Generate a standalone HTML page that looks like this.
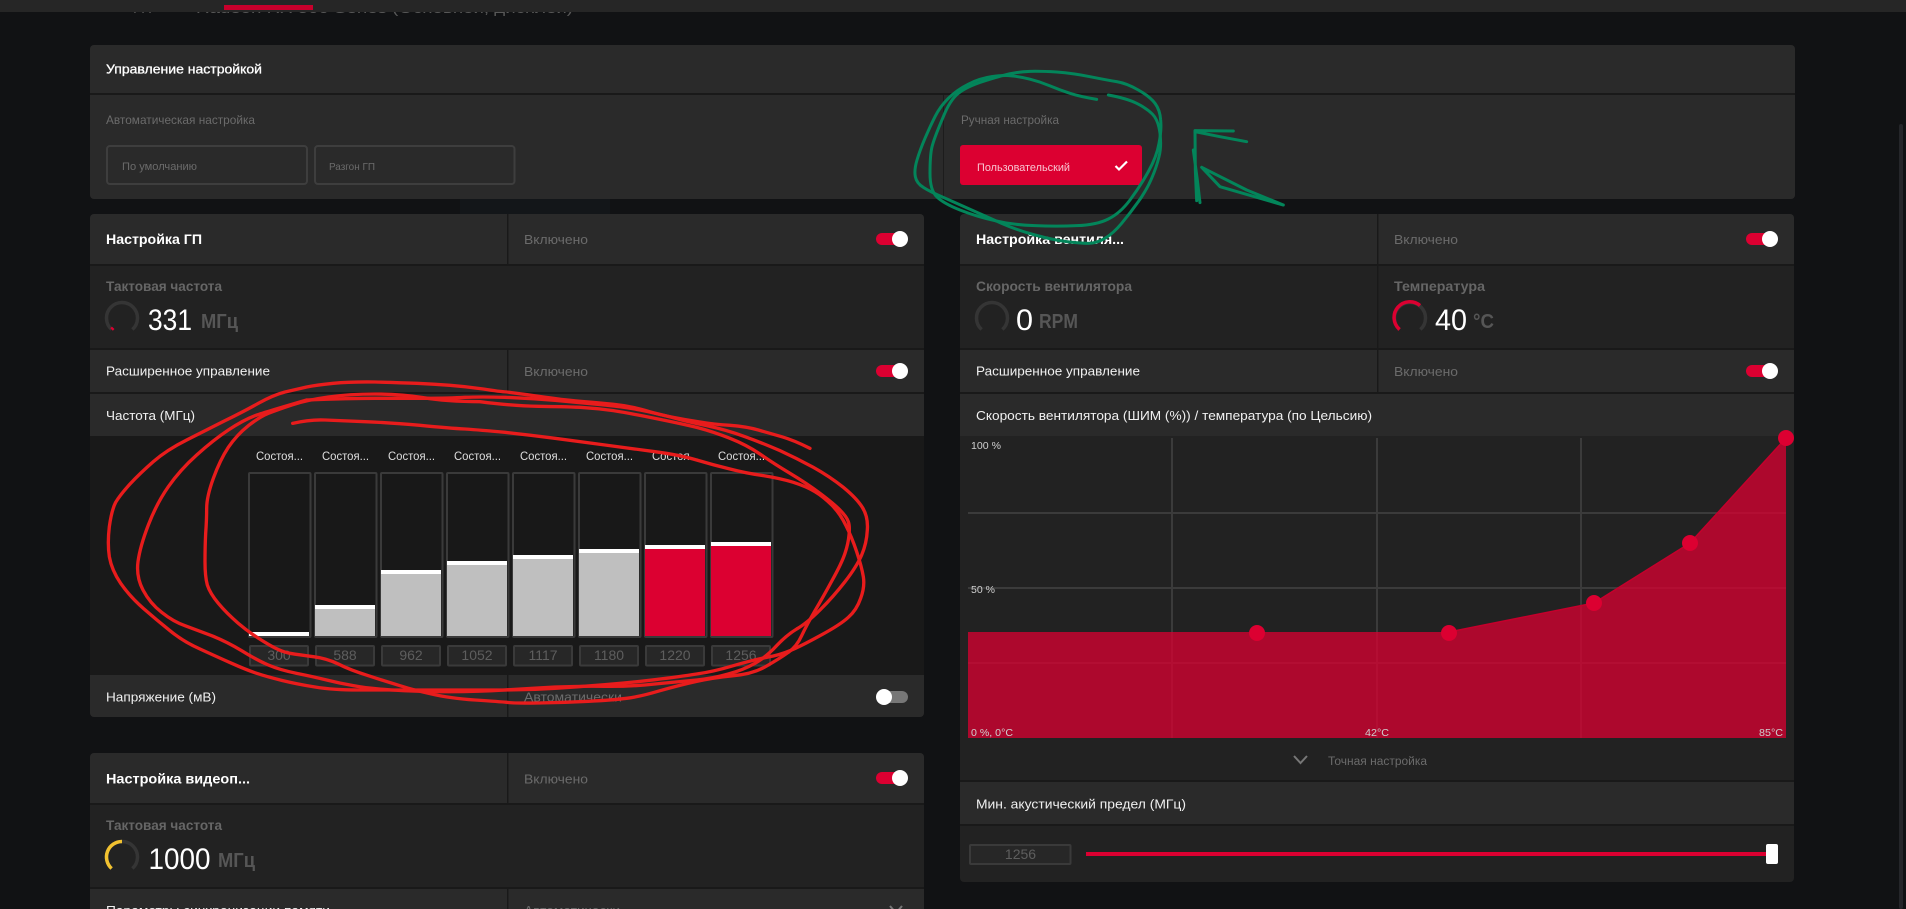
<!DOCTYPE html>
<html lang="ru"><head><meta charset="utf-8"><title>Настройка</title>
<style>
html,body{margin:0;padding:0;width:1906px;height:909px;overflow:hidden;background:#111214}
svg{display:block}
text{font-family:"Liberation Sans","Noto Sans CJK SC",sans-serif}
.w{fill:#f0f0f0;font-size:13px}
.b{fill:#fff;font-size:14px;font-weight:700}
.g{fill:#6b6b6b;font-size:13px}
.s{fill:#666;font-size:14px;font-weight:700}
.u{fill:#565656;font-size:20px;font-weight:700}
.n{fill:#fff;font-size:30px}
.st{fill:#dedede;font-size:12px;text-anchor:start}
.v{fill:#5e5e5e;font-size:14px;text-anchor:middle}
.c{fill:#cfcfcf;font-size:10.5px}
.r{fill:#2a2a2a}.d{fill:#222}.dk{fill:#191919}
.ga{fill:none;stroke:#353535;stroke-width:3.500}
</style></head><body>
<svg width="1906" height="909" viewBox="0 0 1906 909" xmlns="http://www.w3.org/2000/svg">
<rect width="1906" height="909" fill="#111214"/>
<rect x="460" y="199" width="150" height="15" fill="#131619"/>
<rect x="1899" y="124" width="4" height="785" rx="2" fill="#25262a"/>

<!-- top bar -->
<text x="133" y="13" fill="#585858" font-size="15">ГП</text>
<text x="196" y="13" fill="#585858" font-size="15" textLength="377" lengthAdjust="spacingAndGlyphs">Radeon RX 500 Series (Основной, дисплей)</text>
<rect width="1906" height="12" fill="#262626"/>
<rect x="224" y="5" width="89" height="5" fill="#c8002c"/>

<!-- tuning control -->
<g>
<rect x="90" y="45" width="1705" height="154" rx="4" fill="#191919"/>
<path d="M90 93V49a4 4 0 0 1 4-4H1791a4 4 0 0 1 4 4V93Z" class="r"/>
<path d="M90 95H1795V195a4 4 0 0 1-4 4H94a4 4 0 0 1-4-4Z" class="r"/>
<rect x="943" y="95" width="1" height="104" fill="#1c1c1c"/>
<text x="106" y="73.500" fill="#fff" font-size="13" stroke="#fff" stroke-width=".3" textLength="156" lengthAdjust="spacingAndGlyphs">Управление настройкой</text>
<text x="106" y="124" class="g" style="font-size:12px" textLength="149" lengthAdjust="spacingAndGlyphs">Автоматическая настройка</text>
<text x="961" y="124" class="g" style="font-size:12px" textLength="98" lengthAdjust="spacingAndGlyphs">Ручная настройка</text>
<rect x="107" y="146" width="200" height="38" rx="3" fill="none" stroke="#3e3e3e" stroke-width="2"/>
<rect x="315" y="146" width="199.500" height="38" rx="3" fill="none" stroke="#3e3e3e" stroke-width="2"/>
<text x="122" y="170" class="g" style="font-size:11px" textLength="75" lengthAdjust="spacingAndGlyphs">По умолчанию</text>
<text x="329" y="170" class="g" style="font-size:10.500px" textLength="46" lengthAdjust="spacingAndGlyphs">Разгон ГП</text>
<rect x="960" y="145" width="182" height="40" rx="3" fill="#dc0031"/>
<text x="977" y="171" fill="#f8c4d0" font-size="11" textLength="93" lengthAdjust="spacingAndGlyphs">Пользовательский</text>
<path d="M1115.500 166l3.500 3.500 8-8" fill="none" stroke="#fff" stroke-width="2.200"/>
</g>

<!-- GPU card -->
<g>
<rect x="90" y="214" width="834" height="503" rx="4" fill="#191919"/>
<path d="M90 264V218a4 4 0 0 1 4-4H507V264Z" class="r"/>
<path d="M508.500 214H920a4 4 0 0 1 4 4V264H508.500Z" class="r"/>
<rect x="90" y="266" width="834" height="82" class="d"/>
<rect x="90" y="350" width="417" height="42" class="r"/><rect x="508.500" y="350" width="415.500" height="42" class="r"/>
<rect x="90" y="394" width="834" height="42" class="r"/>
<path d="M90 675H507V717H94a4 4 0 0 1-4-4Z" class="r"/>
<path d="M508.500 675H924V713a4 4 0 0 1-4 4H508.500Z" class="r"/>
<text x="106" y="244" class="b" textLength="96" lengthAdjust="spacingAndGlyphs">Настройка ГП</text>
<text x="524" y="244" class="g" textLength="64" lengthAdjust="spacingAndGlyphs">Включено</text>
<rect x="876" y="233" width="30" height="12" rx="6" fill="#dc0031"/><circle cx="900" cy="239" r="8" fill="#fff"/>
<text x="106" y="291" class="s" textLength="116" lengthAdjust="spacingAndGlyphs">Тактовая частота</text>
<path d="M111.600 329.500A15.500 15.500 0 1 1 132.400 329.500" class="ga"/>
<path d="M111.600 329.500L113.200 327.800" fill="none" stroke="#dc0031" stroke-width="3.500"/>
<text x="148" y="330" class="n" textLength="44" lengthAdjust="spacingAndGlyphs">331</text>
<text x="201" y="328" class="u" textLength="37" lengthAdjust="spacingAndGlyphs">МГц</text>
<text x="106" y="375.500" class="w" textLength="164" lengthAdjust="spacingAndGlyphs">Расширенное управление</text>
<text x="524" y="376" class="g" textLength="64" lengthAdjust="spacingAndGlyphs">Включено</text>
<rect x="876" y="365" width="30" height="12" rx="6" fill="#dc0031"/><circle cx="900" cy="371" r="8" fill="#fff"/>
<text x="106" y="420" class="w" textLength="89" lengthAdjust="spacingAndGlyphs">Частота (МГц)</text>

<text x="256" y="460" class="st" textLength="47" lengthAdjust="spacingAndGlyphs">Состоя...</text>
<text x="322" y="460" class="st" textLength="47" lengthAdjust="spacingAndGlyphs">Состоя...</text>
<text x="388" y="460" class="st" textLength="47" lengthAdjust="spacingAndGlyphs">Состоя...</text>
<text x="454" y="460" class="st" textLength="47" lengthAdjust="spacingAndGlyphs">Состоя...</text>
<text x="520" y="460" class="st" textLength="47" lengthAdjust="spacingAndGlyphs">Состоя...</text>
<text x="586" y="460" class="st" textLength="47" lengthAdjust="spacingAndGlyphs">Состоя...</text>
<text x="652" y="460" class="st" textLength="47" lengthAdjust="spacingAndGlyphs">Состоя...</text>
<text x="718" y="460" class="st" textLength="47" lengthAdjust="spacingAndGlyphs">Состоя...</text>

<g fill="#181818" stroke="#3a3a3a" stroke-width="2">
<rect x="249" y="473" width="61.500" height="164" rx="1"/><rect x="315" y="473" width="61.500" height="164" rx="1"/>
<rect x="381" y="473" width="61.500" height="164" rx="1"/><rect x="447" y="473" width="61.500" height="164" rx="1"/>
<rect x="513" y="473" width="61.500" height="164" rx="1"/><rect x="579" y="473" width="61.500" height="164" rx="1"/>
<rect x="645" y="473" width="61.500" height="164" rx="1"/><rect x="711" y="473" width="61.500" height="164" rx="1"/>
</g>
<g fill="#bfbfbf">
<rect x="315" y="609" width="60" height="27"/><rect x="381" y="574" width="60" height="62"/>
<rect x="447" y="565" width="60" height="71"/><rect x="513" y="559" width="60" height="77"/>
<rect x="579" y="553" width="60" height="83"/>
</g>
<g fill="#dc0031"><rect x="645" y="549" width="60" height="87"/><rect x="711" y="546" width="60" height="90"/></g>
<g fill="#fff">
<rect x="249" y="632" width="60" height="4"/><rect x="315" y="605" width="60" height="4"/>
<rect x="381" y="570" width="60" height="4"/><rect x="447" y="561" width="60" height="4"/>
<rect x="513" y="555" width="60" height="4"/><rect x="579" y="549" width="60" height="4"/>
<rect x="645" y="545" width="60" height="4"/><rect x="711" y="542" width="60" height="4"/>
</g>
<g fill="#272727" stroke="#3a3a3a" stroke-width="2">
<rect x="250" y="646" width="58" height="19.500" rx="1"/><rect x="316" y="646" width="58" height="19.500" rx="1"/>
<rect x="382" y="646" width="58" height="19.500" rx="1"/><rect x="448" y="646" width="58" height="19.500" rx="1"/>
<rect x="514" y="646" width="58" height="19.500" rx="1"/><rect x="580" y="646" width="58" height="19.500" rx="1"/>
<rect x="646" y="646" width="58" height="19.500" rx="1"/><rect x="712" y="646" width="58" height="19.500" rx="1"/>
</g>
<text x="279" y="660" class="v">300</text><text x="345" y="660" class="v">588</text>
<text x="411" y="660" class="v">962</text><text x="477" y="660" class="v">1052</text>
<text x="543" y="660" class="v">1117</text><text x="609" y="660" class="v">1180</text>
<text x="675" y="660" class="v">1220</text><text x="741" y="660" class="v">1256</text>
<text x="106" y="701.500" class="w" textLength="110" lengthAdjust="spacingAndGlyphs">Напряжение (мВ)</text>
<text x="524" y="701.500" class="g" textLength="98" lengthAdjust="spacingAndGlyphs">Автоматически</text>
<rect x="880" y="691" width="28" height="12" rx="6" fill="#777"/><circle cx="884" cy="697" r="8" fill="#fff"/>
</g>

<!-- Video card -->
<g>
<rect x="90" y="753" width="834" height="170" rx="4" fill="#191919"/>
<path d="M90 803V757a4 4 0 0 1 4-4H507V803Z" class="r"/>
<path d="M508.500 753H920a4 4 0 0 1 4 4V803H508.500Z" class="r"/>
<rect x="90" y="805" width="834" height="82" class="d"/>
<rect x="90" y="889" width="417" height="20" class="r"/><rect x="508.500" y="889" width="415.500" height="20" class="r"/>
<text x="106" y="783.500" class="b" textLength="144" lengthAdjust="spacingAndGlyphs">Настройка видеоп...</text>
<text x="524" y="783.500" class="g" textLength="64" lengthAdjust="spacingAndGlyphs">Включено</text>
<rect x="876" y="772" width="30" height="12" rx="6" fill="#dc0031"/><circle cx="900" cy="778" r="8" fill="#fff"/>
<text x="106" y="830" class="s" textLength="116" lengthAdjust="spacingAndGlyphs">Тактовая частота</text>
<path d="M111.600 868.500A15.500 15.500 0 1 1 132.400 868.500" class="ga"/>
<path d="M111.600 868.500A15.500 15.500 0 0 1 122 841.500" fill="none" stroke="#f2c230" stroke-width="3.500"/>
<text x="148.500" y="869" class="n" textLength="62" lengthAdjust="spacingAndGlyphs">1000</text>
<text x="218" y="867" class="u" textLength="37" lengthAdjust="spacingAndGlyphs">МГц</text>
<text x="106" y="915" class="w" textLength="224" lengthAdjust="spacingAndGlyphs">Параметры синхронизации памяти</text>
<text x="524" y="915" class="g" textLength="96" lengthAdjust="spacingAndGlyphs">Автоматически</text>
<path d="M890 906l6 7 6-7" fill="none" stroke="#777" stroke-width="2"/>
</g>

<!-- Fan card -->
<g>
<rect x="960" y="214" width="834" height="668" rx="4" fill="#191919"/>
<path d="M960 264V218a4 4 0 0 1 4-4H1377V264Z" class="r"/>
<path d="M1378.500 214H1790a4 4 0 0 1 4 4V264H1378.500Z" class="r"/>
<rect x="960" y="266" width="417" height="82" class="d"/><rect x="1378.500" y="266" width="415.500" height="82" class="d"/>
<rect x="960" y="350" width="417" height="42" class="r"/><rect x="1378.500" y="350" width="415.500" height="42" class="r"/>
<rect x="960" y="394" width="834" height="42" class="r"/>
<rect x="960" y="436" width="834" height="304" class="d"/>
<rect x="960" y="740" width="834" height="40" class="d"/>
<rect x="960" y="782" width="834" height="42" class="r"/>
<path d="M960 826H1794V878a4 4 0 0 1-4 4H964a4 4 0 0 1-4-4Z" class="d"/>
<text x="976" y="244" class="b" textLength="148" lengthAdjust="spacingAndGlyphs">Настройка вентиля...</text>
<text x="1394" y="244" class="g" textLength="64" lengthAdjust="spacingAndGlyphs">Включено</text>
<rect x="1746" y="233" width="30" height="12" rx="6" fill="#dc0031"/><circle cx="1770" cy="239" r="8" fill="#fff"/>
<text x="976" y="291" class="s" textLength="156" lengthAdjust="spacingAndGlyphs">Скорость вентилятора</text>
<text x="1394" y="291" class="s" textLength="91" lengthAdjust="spacingAndGlyphs">Температура</text>
<path d="M981.600 329.500A15.500 15.500 0 1 1 1002.400 329.500" class="ga"/>
<text x="1016" y="330" class="n" textLength="17" lengthAdjust="spacingAndGlyphs">0</text>
<text x="1039" y="328" class="u" textLength="39" lengthAdjust="spacingAndGlyphs">RPM</text>
<path d="M1399.600 329.500A15.500 15.500 0 1 1 1420.400 329.500" class="ga"/>
<path d="M1399.600 329.500A15.500 15.500 0 0 1 1420 305.500" fill="none" stroke="#dc0031" stroke-width="3.500"/>
<text x="1435" y="330" class="n" textLength="32" lengthAdjust="spacingAndGlyphs">40</text>
<text x="1473" y="328" class="u" textLength="21" lengthAdjust="spacingAndGlyphs">°C</text>
<text x="976" y="375.500" class="w" textLength="164" lengthAdjust="spacingAndGlyphs">Расширенное управление</text>
<text x="1394" y="376" class="g" textLength="64" lengthAdjust="spacingAndGlyphs">Включено</text>
<rect x="1746" y="365" width="30" height="12" rx="6" fill="#dc0031"/><circle cx="1770" cy="371" r="8" fill="#fff"/>
<text x="976" y="420" class="w" textLength="396" lengthAdjust="spacingAndGlyphs">Скорость вентилятора (ШИМ (%)) / температура (по Цельсию)</text>

<!-- chart -->
<path d="M968 513H1786M968 588H1786M968 663H1786M1172 438V738M1377 438V738M1581 438V738" fill="none" stroke="#3b3b3b" stroke-width="2"/>
<polygon points="968,632 1449,632 1594,603 1690,543 1786,438 1786,738 968,738" fill="#dc0031" fill-opacity=".75"/>
<path d="M1449 632L1594 603L1690 543L1786 438" fill="none" stroke="#c4002c" stroke-width="1.500"/>
<g fill="#dc0031"><circle cx="1257" cy="633" r="8"/><circle cx="1449" cy="633" r="8"/><circle cx="1594" cy="603" r="8"/><circle cx="1690" cy="543" r="8"/><circle cx="1786" cy="438" r="8"/></g>
<text x="971" y="449" class="c" textLength="30" lengthAdjust="spacingAndGlyphs">100 %</text>
<text x="971" y="593" class="c" textLength="24" lengthAdjust="spacingAndGlyphs">50 %</text>
<text x="971" y="736" class="c" textLength="42" lengthAdjust="spacingAndGlyphs">0 %, 0°C</text>
<text x="1365" y="736" class="c" textLength="24" lengthAdjust="spacingAndGlyphs">42°C</text>
<text x="1759" y="736" class="c" textLength="24" lengthAdjust="spacingAndGlyphs">85°C</text>

<path d="M1294 756l6.500 7 6.500-7" fill="none" stroke="#777" stroke-width="2"/>
<text x="1328" y="765" class="g" style="font-size:11.500px" textLength="99" lengthAdjust="spacingAndGlyphs">Точная настройка</text>
<text x="976" y="808.500" class="w" textLength="210" lengthAdjust="spacingAndGlyphs">Мин. акустический предел (МГц)</text>
<rect x="970" y="845" width="100.500" height="19" rx="1" fill="#272727" stroke="#3a3a3a" stroke-width="2"/>
<text x="1020.500" y="859" class="v">1256</text>
<rect x="1086" y="852" width="684" height="4" fill="#dc0031"/>
<rect x="1766" y="844" width="12" height="20" rx="2" fill="#fff"/>
</g>

<!-- red annotation -->
<g transform="translate(100 380) scale(.33333)" fill="none" stroke="#e81c1c" stroke-width="10" stroke-linejoin="round" stroke-linecap="round">
<path d="M2130 205Q2080 180 2045 170Q2010 160 1975 150Q1940 140 1890 136Q1840 133 1800 126Q1760 120 1720 112Q1680 105 1635 91Q1590 78 1540 73Q1490 68 1440 64Q1390 60 1315 49Q1240 38 1220 36Q1200 35 1150 27Q1100 20 1050 16Q1000 12 950 10Q900 8 825 6Q750 5 700 10Q650 15 620 21Q590 28 555 36Q520 45 475 70Q430 95 375 122Q320 150 260 180Q200 210 160 245Q120 280 90 312Q60 345 47 367Q35 390 28 440Q22 490 28 530Q35 570 62 610Q90 650 130 685Q170 720 210 752Q250 785 300 807Q350 830 395 850Q440 870 470 880Q500 890 545 901Q590 912 645 921Q700 930 775 930Q850 930 925 930Q1000 930 1070 930Q1140 930 1215 930Q1290 930 1365 925Q1440 920 1515 914Q1590 908 1665 899Q1740 890 1790 882Q1840 875 1900 857Q1960 840 2000 832Q2040 825 2070 812Q2100 800 2160 767Q2220 735 2245 712Q2270 690 2282 655Q2295 620 2290 590Q2285 560 2270 515Q2255 470 2237 435Q2220 400 2195 375Q2170 350 2145 335Q2120 320 2080 307Q2040 295 1990 287Q1940 280 1890 267Q1840 255 1790 240Q1740 225 1665 215Q1590 205 1515 195Q1440 185 1365 175Q1290 165 1215 157Q1140 150 1095 147Q1050 145 960 136Q870 128 795 125Q720 122 675 120Q630 118 578 130"/>
<path d="M620 60Q500 95 465 107Q430 120 385 150Q340 180 290 225Q240 270 205 320Q170 370 145 435Q120 500 114 545Q108 590 129 630Q150 670 185 697Q220 725 255 737Q290 750 335 767Q380 785 425 812Q470 840 505 855Q540 870 590 880Q640 890 680 900Q720 910 760 917Q800 925 875 930Q950 935 1045 935Q1140 935 1215 930Q1290 925 1365 921Q1440 918 1515 919Q1590 920 1665 912Q1740 905 1790 900Q1840 895 1885 882Q1930 870 1965 850Q2000 830 2030 797Q2060 765 2090 747Q2120 730 2160 690Q2200 650 2235 605Q2270 560 2285 525Q2300 490 2302 450Q2305 410 2287 382Q2270 355 2230 322Q2190 290 2140 262Q2090 235 2040 212Q1990 190 1935 170Q1880 150 1820 137Q1760 125 1715 112Q1670 100 1620 90Q1570 80 1505 74Q1440 68 1365 61Q1290 55 1215 52Q1140 50 1095 52Q1050 55 975 55Q900 55 825 55Q750 55 620 60"/>
<path d="M1140 65Q1040 65 970 53Q900 42 825 42Q750 42 685 51Q620 60 575 75Q530 90 505 100Q480 110 445 137Q410 165 385 202Q360 240 340 295Q320 350 320 385Q320 420 317 460Q315 500 315 545Q315 590 322 615Q330 640 355 670Q380 700 415 730Q450 760 495 787Q540 815 570 820Q600 825 640 830Q680 835 715 852Q750 870 805 887Q860 905 900 917Q940 930 995 942Q1050 955 1125 960Q1200 965 1220 967Q1240 970 1315 969Q1390 968 1465 964Q1540 960 1580 955Q1620 950 1680 932Q1740 915 1790 904Q1840 893 1900 887Q1960 882 2000 858Q2040 835 2065 817Q2090 800 2105 767Q2120 735 2145 692Q2170 650 2197 600Q2225 550 2235 520Q2245 490 2247 465Q2250 440 2245 425Q2240 410 2220 390Q2200 370 2160 340Q2120 310 2070 280Q2020 250 1980 222Q1940 195 1890 175Q1840 155 1790 142Q1740 130 1665 115Q1590 100 1540 92Q1490 85 1440 82Q1390 80 1315 79Q1240 78 1140 65"/>
</g>

<!-- green annotation -->
<g transform="translate(900 70) scale(.33333)" fill="none" stroke="#03855a" stroke-width="9" stroke-linejoin="round" stroke-linecap="round">
<path d="M590 88Q540 80 510 70Q480 60 450 47.500Q420 35 390 27.500Q360 20 335 17.500Q310 15 275 20Q240 25 205 42.500Q170 60 145 85Q120 110 105 140Q90 170 75 205Q60 240 51 270Q42 300 46 320Q50 340 70 352Q90 365 130 382Q170 400 215 420Q260 440 305 460Q350 480 405 495Q460 510 500 515Q540 520 565 520Q590 520 615 505Q640 490 665 460Q690 430 715 395Q740 360 755 325Q770 290 777 260Q785 230 780 190Q775 150 757 132Q740 115 710 100Q680 85 625 75"/>
<path d="M130 140Q100 210 95 235Q90 260 90 310Q90 360 110 380Q130 400 180 420Q230 440 285 452Q340 465 405 467Q470 470 530 467Q590 465 625 447Q660 430 690 390Q720 350 745 305Q770 260 777 220Q785 180 782 150Q780 120 765 100Q750 80 715 60Q680 40 650 35Q620 30 570 20Q520 10 470 6Q420 3 390 4Q360 5 330 11Q300 18 250 34Q200 50 175 70Q150 90 130 140"/>
<path d="M900 398L892 330 880 240M890 392L886 300 885 182 1000 183M885 185L960 200 1040 215M905 292L960 350 1150 405M905 292L1040 360 1150 405"/>
</g>
</svg>
</body></html>
